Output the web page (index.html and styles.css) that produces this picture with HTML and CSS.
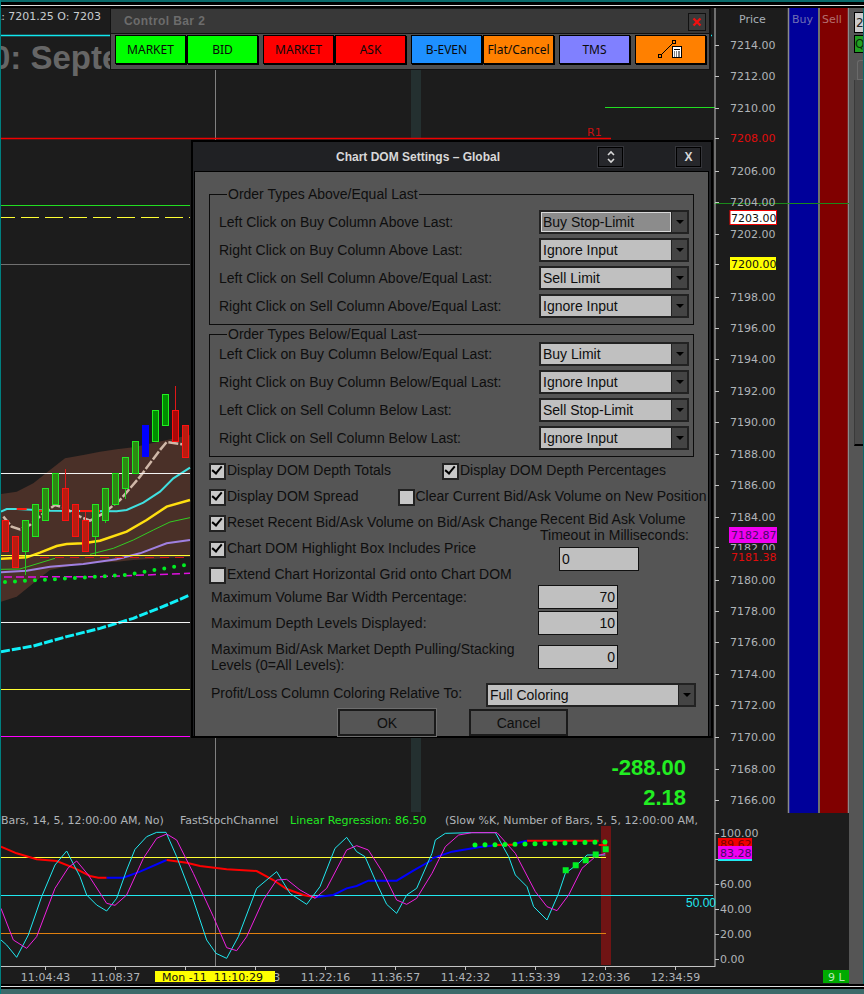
FILE: index.html
```html
<!DOCTYPE html>
<html lang="en">
<head>
    <meta charset="UTF-8">
    <title>Chart DOM Settings</title>
    <link rel="stylesheet" href="styles.css">
</head>
<body>
<div class="app">
    <div class="strip-top"></div>
    <div class="workspace">
        <svg class="chart" width="849" height="976" viewBox="0 8 849 976">
            <!-- dom columns -->
            <rect class="col-buy" x="789" y="8" width="29" height="805"/>
            <rect class="col-sell" x="820" y="8" width="28" height="805"/>
            <path class="col-sep" d="M788.5 8V813M819 8V813M848.5 8V813"/>
            <text class="head-price" x="739" y="23">Price</text>
            <text class="head-buy" x="792" y="23">Buy</text>
            <text class="head-sell" x="822" y="23">Sell</text>

            <!-- price pane levels -->
            <line class="l-cyan" x1="1" y1="35.5" x2="712" y2="35.5"/>
            <rect class="teal-bar" x="411" y="70" width="10" height="69"/>
            <rect class="teal-bar" x="411" y="737" width="10" height="75"/>
            <line class="l-cross" x1="215.5" y1="70" x2="215.5" y2="966"/>
            <line class="l-red" x1="1" y1="138.5" x2="611" y2="138.5"/>
            <text class="r1" x="587" y="136">R1</text>
            <line class="l-green" x1="1" y1="205.5" x2="190" y2="205.5"/>
            <line class="l-green" x1="605" y1="107.5" x2="715" y2="107.5"/>
            <line class="l-green-thin" x1="714" y1="203.5" x2="850" y2="203.5"/>
            <line class="l-yellow-dash" x1="1" y1="217.5" x2="190" y2="217.5"/>
            <line class="l-gray" x1="1" y1="264.5" x2="190" y2="264.5"/>
            <line class="l-yellow" x1="1" y1="689.5" x2="190" y2="689.5"/>
            <line class="l-magenta" x1="1" y1="736.5" x2="190" y2="736.5"/>

            <!-- bands and averages, traced at 3x -->
            <g transform="translate(0,370) scale(0.33333)">
                <polygon class="band" points="3,372 50,365 100,340 150,300 195,265 250,255 300,245 350,238 400,232 570,195 570,560 400,570 350,575 250,580 150,600 100,640 50,680 3,695"/>
                <polyline class="ma-cyan" points="3,425 20,417 50,417 150,422 350,424 380,420 430,398 480,365 520,325 570,293"/>
                <path class="ma-red" d="M50 417H80M100 422H130M240 423H300"/>
                <polyline class="ma-tan" points="10,440 35,470 60,478 90,465 130,430 165,405 190,412 240,440 270,452 310,430 360,390 420,320 480,240 500,216 560,225"/>
                <polyline class="ma-yellow" points="3,566 80,562 120,548 170,528 200,522 250,520 300,512 380,485 440,450 500,410 570,390"/>
                <polyline class="ma-green" points="3,598 60,597 165,565"/>
                <polyline class="ma-green" points="270,553 340,535 400,510 460,480 510,456 570,443"/>
                <polyline class="ma-purple" points="3,607 80,602 150,590 250,582 350,568 420,550 500,520 570,510"/>
                <polyline class="ma-magenta" points="12,621 300,620 570,610"/>
                <polyline class="ma-cyan-dash" points="3,845 100,828 200,800 300,775 400,745 500,705 570,675"/>
            </g>
            <line class="l-white" x1="1" y1="473.5" x2="190" y2="473.5"/>
            <line class="l-white" x1="1" y1="622.5" x2="190" y2="622.5"/>
            <line class="l-yellow" x1="1" y1="555.5" x2="190" y2="555.5"/>
            <line class="l-red-dash" x1="40" y1="557.5" x2="190" y2="557.5"/>
            <polyline class="dots" points="5,582 75,578 125,575 185,565"/>

            <!-- candles -->
            <path class="wick-g" d="M25.5 552V575M95.5 536V555M105.5 520V523M125.5 488V499"/>
            <path class="wick-r" d="M65.5 488V469M85.5 520V512M175.5 410V386"/>
            <rect class="c-red" x="2.5" y="520.5" width="6" height="31"/>
            <rect class="c-red" x="12.5" y="536.5" width="6" height="31"/>
            <rect class="c-green" x="22.5" y="520.5" width="6" height="31"/>
            <rect class="c-green" x="32.5" y="504.5" width="6" height="32"/>
            <rect class="c-green" x="42.5" y="488.5" width="6" height="32"/>
            <rect class="c-green" x="52.5" y="473.5" width="6" height="31"/>
            <rect class="c-red" x="62.5" y="488.5" width="6" height="32"/>
            <rect class="c-red" x="72.5" y="504.5" width="6" height="32"/>
            <rect class="c-red" x="82.5" y="520.5" width="6" height="31"/>
            <rect class="c-green" x="92.5" y="504.5" width="6" height="32"/>
            <rect class="c-green" x="102.5" y="488.5" width="6" height="32"/>
            <rect class="c-green" x="112.5" y="473.5" width="6" height="31"/>
            <rect class="c-green" x="122.5" y="457.5" width="6" height="31"/>
            <rect class="c-green" x="132.5" y="441.5" width="6" height="32"/>
            <rect class="c-blue" x="142" y="425" width="7" height="32"/>
            <rect class="c-green-top" x="152.5" y="410.5" width="6" height="31"/>
            <rect class="c-green-top" x="162.5" y="394.5" width="6" height="31"/>
            <rect class="c-red-top" x="172.5" y="410.5" width="6" height="31"/>
            <rect class="c-red" x="182.5" y="425.5" width="6" height="32"/>

            <!-- header texts -->
            <text class="axis-text head-info" x="-5" y="20">L: 7201.25 O: 7203</text>
            <text class="symbol" x="-8" y="69">0: September</text>
            <text class="pnl" x="686" y="775">-288.00</text>
            <text class="pnl" x="686" y="805">2.18</text>

            <!-- price axis -->
            <line class="axis" x1="715" y1="8" x2="715" y2="967"/>
            <line class="axis" x1="0" y1="966.5" x2="715" y2="966.5"/>
            <path class="axis" d="M715 45.5h4M715 76.5h4M715 108.5h4M715 138.5h4M715 171.5h4M715 202.5h4M715 234.5h4M715 264.5h4M715 297.5h4M715 328.5h4M715 359.5h4M715 391.5h4M715 422.5h4M715 454.5h4M715 485.5h4M715 517.5h4M715 547.5h4M715 580.5h4M715 611.5h4M715 642.5h4M715 674.5h4M715 705.5h4M715 737.5h4M715 769.5h4M715 800.5h4"/>
            <g class="axis-text">
                <text x="730" y="49">7214.00</text>
                <text x="730" y="80">7212.00</text>
                <text x="730" y="112">7210.00</text>
                <text class="axis-red" x="730" y="142">7208.00</text>
                <text x="730" y="175">7206.00</text>
                <text x="730" y="206">7204.00</text>
                <text x="730" y="238">7202.00</text>
                <text x="730" y="301">7198.00</text>
                <text x="730" y="332">7196.00</text>
                <text x="730" y="363">7194.00</text>
                <text x="730" y="395">7192.00</text>
                <text x="730" y="426">7190.00</text>
                <text x="730" y="458">7188.00</text>
                <text x="730" y="489">7186.00</text>
                <text x="730" y="521">7184.00</text>
                <text x="730" y="552">7182.00</text>
                <text x="730" y="584">7180.00</text>
                <text x="730" y="615">7178.00</text>
                <text x="730" y="646">7176.00</text>
                <text x="730" y="678">7174.00</text>
                <text x="730" y="709">7172.00</text>
                <text x="730" y="741">7170.00</text>
                <text x="730" y="773">7168.00</text>
                <text x="730" y="804">7166.00</text>
            </g>
            <rect class="tag-last" x="730" y="210.5" width="46.5" height="14"/>
            <text class="axis-text tag-dark" x="731" y="222">7203.00</text>
            <rect class="tag-yellow" x="730" y="257" width="46" height="13"/>
            <text class="axis-text tag-dark" x="731" y="268">7200.00</text>
            <rect class="bg" x="729" y="550" width="48" height="15"/>
            <rect class="tag-magenta" x="729" y="527" width="48" height="16"/>
            <text class="axis-text tag-purple" x="731" y="539">7182.87</text>
            <text class="axis-text axis-red" x="731" y="561">7181.38</text>

            <!-- oscillator pane -->
            <rect class="osc-bar" x="601" y="826" width="10" height="139"/>
            <line class="l-yellow" x1="1" y1="857.5" x2="606" y2="857.5"/>
            <line class="l-cyan-thin" x1="1" y1="895.5" x2="713" y2="895.5"/>
            <line class="l-orange" x1="1" y1="933.5" x2="606" y2="933.5"/>
            <g transform="translate(0,800) scale(0.33333)">
                <polyline class="osc-red" points="3,140 50,160 110,178 170,183 225,205 270,228 295,233 320,233"/>
                <polyline class="osc-blue" points="320,233 370,233 420,215 500,180"/>
                <polyline class="osc-red" points="500,180 560,188 600,198 680,208 770,213 820,240 860,267 910,285 945,292"/>
                <polyline class="osc-blue" points="945,292 1000,285 1040,265 1070,258 1105,242 1190,242 1240,212 1296,180"/>
                <polyline class="osc-k" points="3,420 20,435 50,472 85,405 125,290 165,195 200,153 240,230 260,285 290,315 320,333 350,295 380,210 405,148 440,110 470,97 498,97 530,170 580,300 620,420 648,460 680,475 715,410 770,265 830,215 870,280 920,313 960,260 1005,145 1040,112 1070,155 1095,170 1130,250 1160,313 1190,340 1220,285 1250,265 1296,160"/>
                <polyline class="osc-d" points="3,325 40,420 80,445 110,410 165,265 205,203 230,183 265,225 320,310 345,316 380,285 430,175 470,115 500,102 530,120 580,220 640,350 680,443 710,452 740,410 790,300 830,240 860,238 900,270 945,295 980,265 1040,150 1070,137 1105,150 1150,220 1190,300 1220,313 1250,295 1296,220"/>
            </g>
            <g transform="translate(432,740) scale(0.33333)">
                <polyline class="osc-blue" points="0,355 60,335 140,322 195,315"/>
                <polyline class="osc-red" points="195,315 245,314"/>
                <polyline class="osc-blue" points="245,312 285,302"/>
                <polyline class="osc-red" points="285,302 500,302"/>
                <polyline class="osc-red" points="500,315 525,315"/>
                <polyline class="osc-k" points="0,340 10,300 40,280 118,278 190,278 230,350 250,405 285,440 305,500 345,540 380,460 400,400 440,370 465,345 520,345"/>
                <polyline class="osc-d" points="0,400 40,320 80,285 120,278 195,278 250,340 310,455 345,500 375,512 410,465 450,385 490,350 520,340"/>
            </g>
            <polyline class="dots-lg" points="475,845 530,844 605,842"/>
            <path class="squares" d="M562.7 867.2h6v6h-6zM572.7 862.2h6v6h-6zM582.7 857.2h6v6h-6zM592.7 851.5h6v6h-6zM602.7 846.2h6v6h-6z"/>
            <text class="label-50" x="686" y="907">50.00</text>

            <text class="axis-text" x="1" y="824">Bars, 14, 5, 12:00:00 AM, No)</text>
            <text class="axis-text" x="180" y="824">FastStochChannel</text>
            <text class="axis-text reg-text" x="290" y="824">Linear Regression: 86.50</text>
            <text class="axis-text" x="445" y="824">(Slow %K, Number of Bars, 5, 5, 12:00:00 AM,</text>

            <path class="axis" d="M715 833.5h4M715 859.5h4M715 884.5h4M715 909.5h4M715 934.5h4M715 959.5h4"/>
            <g class="axis-text">
                <text x="720" y="837">100.00</text>
                <text x="720" y="888">60.00</text>
                <text x="720" y="913">40.00</text>
                <text x="720" y="938">20.00</text>
                <text x="720" y="963">0.00</text>
            </g>
            <rect class="l-cyan-fill" x="718" y="859" width="34" height="2"/>
            <rect class="tag-red" x="718" y="838" width="34" height="9"/>
            <text class="axis-text tag-dark-red" x="720" y="848">89.62</text>
            <rect class="tag-magenta" x="718" y="846" width="34" height="13"/>
            <text class="axis-text tag-purple" x="720" y="857">83.28</text>

            <!-- time axis -->
            <path class="axis" d="M45.5 966v4M115.5 966v4M185.5 966v4M255.5 966v4M325.5 966v4M395.5 966v4M465.5 966v4M535.5 966v4M605.5 966v4M675.5 966v4"/>
            <g class="axis-text time-text">
                <text x="45.5" y="981">11:04:43</text>
                <text x="115.5" y="981">11:08:37</text>
                <text x="255.5" y="981">11:18:03</text>
                <text x="325.5" y="981">11:22:16</text>
                <text x="395.5" y="981">11:36:57</text>
                <text x="465.5" y="981">11:42:32</text>
                <text x="535.5" y="981">11:53:39</text>
                <text x="605.5" y="981">12:03:36</text>
                <text x="675.5" y="981">12:34:59</text>
            </g>
            <rect class="tag-yellow" x="155" y="971" width="120" height="11"/>
            <text class="axis-text tag-dark time-cursor" x="162" y="981">Mon -11  11:10:29</text>
            <rect class="tag-green" x="823" y="970" width="26" height="13"/>
            <text class="axis-text tag-lit" x="828" y="981">9 L</text>
        </svg>

        <div class="side">
            <div class="side-box side-num">2</div>
            <div class="side-box side-q">Q</div>
            <div class="side-tab"></div>
            <div class="side-panel"></div>
        </div>
    </div>
    <div class="strip-bottom"></div>

    <!-- floating control bar -->
    <div class="control-bar">
        <div class="bar-title">
            <span>Control Bar 2</span>
            <div class="bar-close">
                <svg width="10" height="10" viewBox="0 0 10 10"><path d="M1.5 1.5L8.5 8.5M8.5 1.5L1.5 8.5"/></svg>
            </div>
        </div>
        <div class="bar-buttons">
            <div class="bar-group">
                <div class="bar-btn green">MARKET</div>
                <div class="bar-btn green">BID</div>
            </div>
            <div class="bar-group">
                <div class="bar-btn red">MARKET</div>
                <div class="bar-btn red">ASK</div>
            </div>
            <div class="bar-group">
                <div class="bar-btn blue">B-EVEN</div>
                <div class="bar-btn orange">Flat/Cancel</div>
            </div>
            <div class="bar-group">
                <div class="bar-btn purple">TMS</div>
            </div>
            <div class="bar-group">
                <div class="bar-btn orange">
                    <svg class="calc-icon" width="69" height="27" viewBox="0 0 69 27">
                        <path class="calc-line" d="M25 19L37 7"/>
                        <rect class="calc-node" x="22.5" y="18.5" width="3" height="3"/>
                        <rect class="calc-node" x="36.5" y="4.5" width="3" height="3"/>
                        <rect class="calc-body" x="36.5" y="10.5" width="9" height="11"/>
                        <path class="calc-keys" d="M38 13.5h6M38 16h1M40 16h1M42 16h2M38 18h1M40 18h1M42 18h2M38 20h1M40 20h1M42 20h2"/>
                    </svg>
                </div>
            </div>
        </div>
    </div>

    <!-- settings dialog -->
    <div class="dialog">
        <div class="dlg-head">
            <div class="dlg-title">Chart DOM Settings &#8211; Global</div>
            <div class="dlg-btn">
                <svg width="10" height="14" viewBox="0 0 10 14"><path d="M2 5L5 2L8 5M2 9L5 12L8 9"/></svg>
            </div>
            <div class="dlg-btn dlg-close">X</div>
        </div>
        <div class="dlg-panel">
            <fieldset class="group">
                <legend>Order Types Above/Equal Last</legend>
                <div class="row">
                    <span>Left Click on Buy Column Above Last:</span>
                    <div class="combo focused"><span class="combo-text">Buy Stop-Limit</span><span class="combo-arrow"></span></div>
                </div>
                <div class="row">
                    <span>Right Click on Buy Column Above Last:</span>
                    <div class="combo"><span class="combo-text">Ignore Input</span><span class="combo-arrow"></span></div>
                </div>
                <div class="row">
                    <span>Left Click on Sell Column Above/Equal Last:</span>
                    <div class="combo"><span class="combo-text">Sell Limit</span><span class="combo-arrow"></span></div>
                </div>
                <div class="row">
                    <span>Right Click on Sell Column Above/Equal Last:</span>
                    <div class="combo"><span class="combo-text">Ignore Input</span><span class="combo-arrow"></span></div>
                </div>
            </fieldset>
            <fieldset class="group group-below">
                <legend>Order Types Below/Equal Last</legend>
                <div class="row">
                    <span>Left Click on Buy Column Below/Equal Last:</span>
                    <div class="combo"><span class="combo-text">Buy Limit</span><span class="combo-arrow"></span></div>
                </div>
                <div class="row">
                    <span>Right Click on Buy Column Below/Equal Last:</span>
                    <div class="combo"><span class="combo-text">Ignore Input</span><span class="combo-arrow"></span></div>
                </div>
                <div class="row">
                    <span>Left Click on Sell Column Below Last:</span>
                    <div class="combo"><span class="combo-text">Sell Stop-Limit</span><span class="combo-arrow"></span></div>
                </div>
                <div class="row">
                    <span>Right Click on Sell Column Below Last:</span>
                    <div class="combo"><span class="combo-text">Ignore Input</span><span class="combo-arrow"></span></div>
                </div>
            </fieldset>

            <div class="checks">
                <div class="check-line">
                    <div class="check on">Display DOM Depth Totals</div>
                    <div class="check on depth-pct">Display DOM Depth Percentages</div>
                </div>
                <div class="check-line">
                    <div class="check on">Display DOM Spread</div>
                    <div class="check clear-vol">Clear Current Bid/Ask Volume on New Position</div>
                </div>
                <div class="check-split">
                    <div class="check-col">
                        <div class="check-line"><div class="check on">Reset Recent Bid/Ask Volume on Bid/Ask Change</div></div>
                        <div class="check-line"><div class="check on">Chart DOM Highlight Box Includes Price</div></div>
                        <div class="check-line"><div class="check">Extend Chart Horizontal Grid onto Chart DOM</div></div>
                    </div>
                    <div class="timeout">
                        <div class="timeout-label">Recent Bid Ask Volume<br>Timeout in Milliseconds:</div>
                        <div class="field field-left">0</div>
                    </div>
                </div>
            </div>

            <div class="num-row">
                <span>Maximum Volume Bar Width Percentage:</span>
                <div class="field">70</div>
            </div>
            <div class="num-row num-second">
                <span>Maximum Depth Levels Displayed:</span>
                <div class="field">10</div>
            </div>
            <div class="num-row num-third">
                <span>Maximum Bid/Ask Market Depth Pulling/Stacking<br>Levels (0=All Levels):</span>
                <div class="field">0</div>
            </div>
            <div class="color-row">
                <span>Profit/Loss Column Coloring Relative To:</span>
                <div class="combo combo-wide"><span class="combo-text">Full Coloring</span><span class="combo-arrow"></span></div>
            </div>
            <div class="dlg-actions">
                <div class="action ok">OK</div>
                <div class="action cancel">Cancel</div>
            </div>
        </div>
    </div>
</div>
</body>
</html>
```

FILE: styles.css
```css
* {
    margin: 0;
    padding: 0;
    box-sizing: border-box;
}

body {
    background-color: #1c1c1c;
    font-family: "Liberation Sans", Arial, sans-serif;
    overflow: hidden;
}

.app {
    position: relative;
    width: 864px;
    height: 994px;
    display: flex;
    flex-direction: column;
    background-color: #1c1c1c;
    border-left: 1px solid #008080;
    overflow: hidden;
}

.strip-top {
    height: 8px;
    margin-left: -1px;
    background: linear-gradient(#0a6a6a 0, #0a6a6a 2px, #000 2px, #000 5px, #ddd 5px, #ddd 6px, #000 6px);
}

.strip-bottom {
    height: 10px;
    margin-left: -1px;
    background: linear-gradient(#000 0, #000 2px, #ddd 2px, #ddd 3px, #000 3px, #000 5px, #3d6a6a 5px);
}

.workspace {
    display: flex;
    height: 976px;
    margin-left: -1px;
}

.chart {
    display: block;
    flex: none;
}

/* right hand sliver of the next window */
.side {
    flex: 1;
    display: flex;
    flex-direction: column;
    align-items: flex-end;
    background-color: #555;
    border-right: 1px solid #0a6a6a;
    overflow: hidden;
}

.side-box {
    width: 9px;
    font-family: "DejaVu Sans", sans-serif;
    font-size: 12px;
    border: 1px solid #000;
    border-right: none;
    overflow: hidden;
}

.side-num {
    height: 21px;
    margin-top: 4px;
    padding: 3px 0 0 1px;
    background-color: #ccc;
    color: #222;
}

.side-q {
    height: 18px;
    margin-top: 2px;
    padding: 1px 0 0 0;
    background-color: #22a022;
    color: #0a2a0a;
}

.side-tab {
    width: 6px;
    height: 20px;
    margin-top: 7px;
    border: 1px solid #6a6a6a;
    border-right: none;
    border-radius: 3px 0 0 0;
}

.side-panel {
    width: 9px;
    height: 366px;
    border-left: 1px solid #3a3a3a;
    border-bottom: 2px solid #000;
    background-color: #4a4a4a;
}

/* chart */
.bg { fill: #1c1c1c; }
.col-buy { fill: #00009a; }
.col-sell { fill: #800000; }
.col-sep { stroke: #8a8a8a; stroke-width: 1.5; fill: none; }

.head-price, .head-buy, .head-sell {
    font-family: "DejaVu Sans", sans-serif;
    font-size: 11px;
}
.head-price { fill: #a8b0b8; }
.head-buy { fill: #6f6fb4; }
.head-sell { fill: #b46f6f; }

.l-cyan { stroke: #10e8f0; stroke-width: 1.5; }
.l-cross { stroke: #808080; stroke-width: 1; }
.l-red { stroke: #f00000; stroke-width: 1.5; }
.l-green { stroke: #22dd22; stroke-width: 1; }
.l-green-thin { stroke: #1a8a1a; stroke-width: 1; }
.l-yellow { stroke: #ffff33; stroke-width: 1; }
.l-yellow-dash { stroke: #ffff33; stroke-width: 1; stroke-dasharray: 18 6; stroke-dashoffset: 4; }
.l-gray { stroke: #707070; stroke-width: 1; }
.l-white { stroke: #f4f4f4; stroke-width: 1; }
.l-magenta { stroke: #ff00ff; stroke-width: 1; }
.l-red-dash { stroke: #d81818; stroke-width: 1; stroke-dasharray: 9 6; }
.l-cyan-thin { stroke: #20e8f0; stroke-width: 1; }
.l-orange { stroke: #e08010; stroke-width: 1; }
.l-cyan-fill { fill: #20e8f0; }
.teal-bar { fill: #243030; }
.r1 { fill: #c81010; font-family: "DejaVu Sans", sans-serif; font-size: 11px; }

.band { fill: #4a3028; }
polyline { fill: none; }
.ma-cyan, .ma-red, .ma-tan, .ma-yellow, .ma-green, .ma-purple, .ma-magenta, .ma-cyan-dash,
.osc-red, .osc-blue, .osc-k, .osc-d {
    vector-effect: non-scaling-stroke;
    fill: none;
}
.ma-cyan { stroke: #40e0e0; stroke-width: 2; }
.ma-red { stroke: #ff1a10; stroke-width: 2; }
.ma-tan { stroke: #d0b8a8; stroke-width: 2.5; stroke-dasharray: 10 2; }
.ma-yellow { stroke: #ffdf10; stroke-width: 2.5; }
.ma-green { stroke: #33cc22; stroke-width: 1; }
.ma-purple { stroke: #a080e0; stroke-width: 2; }
.ma-magenta { stroke: #e010e0; stroke-width: 1.5; stroke-dasharray: 8 4; }
.ma-cyan-dash { stroke: #10f0f8; stroke-width: 3; stroke-dasharray: 9 2; }
.dots { stroke: #00ee22; stroke-width: 4; stroke-linecap: round; stroke-dasharray: 0 10; fill: none; }
.dots-lg { stroke: #00ff20; stroke-width: 5; stroke-linecap: round; stroke-dasharray: 0 10; fill: none; }
.squares { fill: #00ee22; }

.wick-g { stroke: #22c822; stroke-width: 1; fill: none; }
.wick-r { stroke: #e01818; stroke-width: 1; fill: none; }
.c-red { fill: #b81c10; stroke: #ff1010; stroke-width: 1; }
.c-red-top { fill: #a80808; stroke: #ff1010; stroke-width: 1; }
.c-green { fill: #2c8a12; stroke: #22e822; stroke-width: 1; }
.c-green-top { fill: #008f00; stroke: #20f020; stroke-width: 1; }
.c-blue { fill: #0000ff; }

.axis { stroke: #c4c4c4; stroke-width: 1; fill: none; }
.axis-text, .axis-text text {
    font-family: "DejaVu Sans", sans-serif;
    font-size: 11px;
    fill: #b0b4b8;
    white-space: pre;
}
.head-info { fill: #c8ccd0; }
.axis-text .axis-red, .axis-red { fill: #e00c0c; }
.reg-text { fill: #22e822; }
.time-text text { text-anchor: middle; }
.symbol {
    font-family: "Liberation Sans", sans-serif;
    font-weight: bold;
    font-size: 33px;
    fill: #666;
}
.pnl {
    font-family: "Liberation Sans", sans-serif;
    font-weight: bold;
    font-size: 22px;
    fill: #22ee22;
    text-anchor: end;
}
.tag-last { fill: #fff; stroke: #f00000; stroke-width: 1; }
.tag-yellow { fill: #ffff00; }
.tag-magenta { fill: #f000f0; }
.tag-red { fill: #f00000; }
.tag-green { fill: #00aa00; }
.tag-dark { fill: #101010; }
.tag-dark-red { fill: #7a0000; }
.tag-purple { fill: #4a0a6a; }
.tag-lit { fill: #b8e8b8; }
.osc-bar { fill: #701414; }
.osc-red { stroke: #ff0000; stroke-width: 2; }
.osc-blue { stroke: #0000ff; stroke-width: 2; }
.osc-k { stroke: #20e8f0; stroke-width: 1; }
.osc-d { stroke: #f020e0; stroke-width: 1; }
.label-50 {
    font-family: "Liberation Sans", sans-serif;
    font-size: 12px;
    fill: #20e8f0;
}

/* control bar */
.control-bar {
    position: absolute;
    left: 109px;
    top: 8px;
    width: 601px;
    height: 62px;
    background-color: #4e4e4e;
    border: 1px solid #111;
    border-right-width: 2px;
}

.bar-title {
    display: flex;
    justify-content: space-between;
    height: 25px;
    padding: 5px 3px 0 13px;
    background-color: #383838;
    color: #6c6c6c;
    font-size: 12px;
    font-weight: bold;
    letter-spacing: 0.4px;
    border-bottom: 1px solid #111;
}

.bar-close {
    width: 18px;
    height: 18px;
    margin-top: -1px;
    display: flex;
    align-items: center;
    justify-content: center;
    background-color: #3a3a3a;
    border: 1px solid #111;
}

.bar-close path {
    stroke: #f01010;
    stroke-width: 2.4;
    fill: none;
}

.bar-buttons {
    display: flex;
    gap: 7px;
    padding: 2px 0 0 5px;
}

.bar-group {
    display: flex;
    gap: 3px;
}

.bar-btn {
    width: 69px;
    height: 27px;
    display: flex;
    align-items: center;
    justify-content: center;
    color: #0a0a0a;
    font-family: "Noto Sans", sans-serif;
    font-size: 12px;
    box-shadow: 0 0 0 1px #000, 1px 1px 0 1px #000;
}

.green { background-color: #00ff00; }
.red { background-color: #ff0000; }
.blue { background-color: #1e90ff; }
.orange { background-color: #ff8000; }
.purple { background-color: #8080ff; }

.calc-line { stroke: #000; stroke-width: 1; fill: none; }
.calc-node { fill: #ff8000; stroke: #000; stroke-width: 1; }
.calc-body { fill: #fff; stroke: #000; stroke-width: 1; }
.calc-keys { stroke: #000; stroke-width: 1; fill: none; }

/* dialog */
.dialog {
    position: absolute;
    left: 190px;
    top: 140px;
    width: 522px;
    height: 598px;
    display: flex;
    flex-direction: column;
    background-color: #202124;
    border: 2px solid #000;
    padding: 0 2px 2px 1px;
    color: #0e0e0e;
    font-size: 14px;
}

.dlg-head {
    display: flex;
    align-items: center;
    height: 29px;
    flex: none;
}

.dlg-title {
    width: 404px;
    padding-left: 142px;
    color: #d8d8d8;
    font-size: 12px;
    font-weight: bold;
    white-space: nowrap;
}

.dlg-btn {
    width: 25px;
    height: 20px;
    display: flex;
    align-items: center;
    justify-content: center;
    background-color: #26272b;
    border: 1px solid #000;
    box-shadow: 0 0 0 1px #34353a;
    color: #d8d8d8;
    font-size: 12px;
    font-weight: bold;
}

.dlg-btn path {
    stroke: #d8d8d8;
    stroke-width: 1.6;
    fill: none;
}

.dlg-close {
    margin-left: 53px;
}

.dlg-panel {
    flex: 1;
    background-color: #555;
    border: 1px solid #000;
    padding: 14px 14px 0 14px;
}

.group {
    width: 485px;
    border: 1.5px solid #0c0c0c;
    padding: 8px 0 2px 9px;
    display: flex;
    flex-direction: column;
}

.group legend {
    margin-left: 8px;
    line-height: 16px;
    padding: 0 1px;
}

.group-below {
    margin-top: 1px;
    padding-top: 0;
}

.row {
    display: flex;
    justify-content: space-between;
    align-items: center;
    height: 28px;
    padding: 0 4px 4px 0;
    white-space: nowrap;
}

.combo {
    width: 150px;
    height: 24px;
    display: flex;
    background-color: #c0c0c0;
    border: 2px solid #222;
}

.combo-text {
    flex: 1;
    padding-left: 2px;
    line-height: 20px;
}

.combo-arrow {
    position: relative;
    width: 16px;
    flex: none;
    background-color: #444;
    border-left: 1px solid #222;
}

.combo-arrow::after {
    content: '';
    position: absolute;
    left: 4px;
    top: 8px;
    border-left: 4px solid transparent;
    border-right: 4px solid transparent;
    border-top: 4px solid #000;
}

.focused .combo-text {
    background-color: #8c8c8c;
    border: 1px solid #d8d8d8;
    line-height: 18px;
    padding-left: 1px;
}

.combo-wide {
    width: 210px;
}

.checks {
    margin-bottom: -2px;
}

.check-line {
    display: flex;
    align-items: center;
    height: 26px;
    white-space: nowrap;
}

.check {
    position: relative;
    padding-left: 18px;
    line-height: 16px;
}

.check::before {
    content: '';
    position: absolute;
    left: 0;
    top: 1px;
    width: 13px;
    height: 13px;
    background-color: #c8c8c8;
    border: 2px solid #222;
}

.check.on::after {
    content: '';
    position: absolute;
    left: 5px;
    top: 2px;
    width: 4px;
    height: 8px;
    border: solid #000;
    border-width: 0 2px 2px 0;
    transform: rotate(40deg);
}

.depth-pct {
    margin-left: 51px;
}

.clear-vol {
    margin-left: 39px;
}

.check-split {
    display: flex;
}

.check-col {
    width: 331px;
}

.timeout {
    padding-top: 2px;
    line-height: 16px;
    white-space: nowrap;
}

.timeout-label {
    margin-bottom: 4px;
}

.field {
    width: 80px;
    height: 24px;
    padding: 0 2px;
    background-color: #c0c0c0;
    border: 1px solid #111;
    line-height: 22px;
    text-align: right;
}

.field-left {
    margin-left: 19px;
    text-align: left;
}

.num-row {
    display: grid;
    grid-template-columns: 327px 80px;
    align-items: center;
    padding-left: 2px;
    line-height: 16px;
    white-space: nowrap;
}

.num-second {
    margin-top: 2px;
}

.num-third {
    margin-top: 6px;
}

.color-row {
    display: flex;
    justify-content: space-between;
    align-items: flex-start;
    width: 487px;
    margin-top: 10px;
    padding: 2px 0 0 2px;
    white-space: nowrap;
}

.color-row .combo {
    margin-top: -2px;
}

.dlg-actions {
    display: flex;
    gap: 33px;
    margin-top: 2px;
    padding-left: 129px;
}

.action {
    width: 98px;
    height: 27px;
    display: flex;
    align-items: center;
    justify-content: center;
    border: 2px solid #1a1a1a;
    box-shadow: 0 0 0 1px #6e6e6e;
}

.cancel {
    box-shadow: none;
    width: 99px;
}
```
